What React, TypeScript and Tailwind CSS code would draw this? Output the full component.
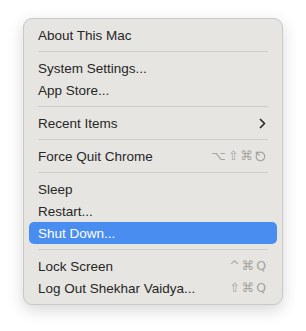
import React from "react";

type Item = {
  label: string;
  keys?: string[];
  esc?: boolean;
  submenu?: boolean;
  active?: boolean;
};

const groups: Item[][] = [
  [{ label: "About This Mac" }],
  [{ label: "System Settings..." }, { label: "App Store..." }],
  [{ label: "Recent Items", submenu: true }],
  [{ label: "Force Quit Chrome", keys: ["⌥", "⇧", "⌘"], esc: true }],
  [{ label: "Sleep" }, { label: "Restart..." }, { label: "Shut Down...", active: true }],
  [
    { label: "Lock Screen", keys: ["^", "⌘", "Q"] },
    { label: "Log Out Shekhar Vaidya...", keys: ["⇧", "⌘", "Q"] },
  ],
];

const EscGlyph = () => (
  <svg width="11" height="11" viewBox="0 0 12 12" fill="none" stroke="currentColor" strokeWidth="1.3" strokeLinecap="round">
    <path d="M4.2 1.6 A4.7 4.7 0 1 1 1.6 4.2" />
    <path d="M1.5 1.5 L4.6 4.6" />
    <path d="M1.5 4.2 V1.5 H4.2" />
  </svg>
);

const Chevron = () => (
  <svg width="7" height="11" viewBox="0 0 7 11" fill="none" stroke="#2a2a2a" strokeWidth="1.7" strokeLinecap="round" strokeLinejoin="round">
    <path d="M1.5 1.5 L5.5 5.5 L1.5 9.5" />
  </svg>
);

const Row = ({ item }: { item: Item }) => (
  <div
    className={`flex h-[22px] items-center justify-between rounded-[5px] pl-[9px] pr-[11px] ${
      item.active ? "bg-[#4a8df0] text-white" : "text-[#262626]"
    }`}
  >
    <span className="mt-[1px] text-[13.5px] leading-none">{item.label}</span>
    {item.submenu && <Chevron />}
    {item.keys && (
      <span className="mt-[1px] flex items-center gap-[2px] text-[12.5px] leading-none text-[#a4a3a1] [font-family:'DejaVu_Sans',sans-serif]">
        {item.keys.map((k, i) => (
          <span key={i}>{k}</span>
        ))}
        {item.esc && <EscGlyph />}
      </span>
    )}
  </div>
);

export default function App() {
  return (
    <div className="h-[331px] w-[306px] bg-white pl-[23px] pt-[18px] [font-family:'Liberation_Sans',Arial,sans-serif]">
      <div className="w-[260px] rounded-[9px] border border-[#cbc9c6] bg-[#e7e5e2] p-[5px] shadow-[0_5px_16px_rgba(0,0,0,0.16)]">
        {groups.map((group, gi) => (
          <div key={gi}>
            {gi > 0 && (
              <div className="flex h-[11px] items-center px-[9px]">
                <div className="h-px w-full bg-[#cfcdca]" />
              </div>
            )}
            {group.map((item) => (
              <Row key={item.label} item={item} />
            ))}
          </div>
        ))}
      </div>
    </div>
  );
}
